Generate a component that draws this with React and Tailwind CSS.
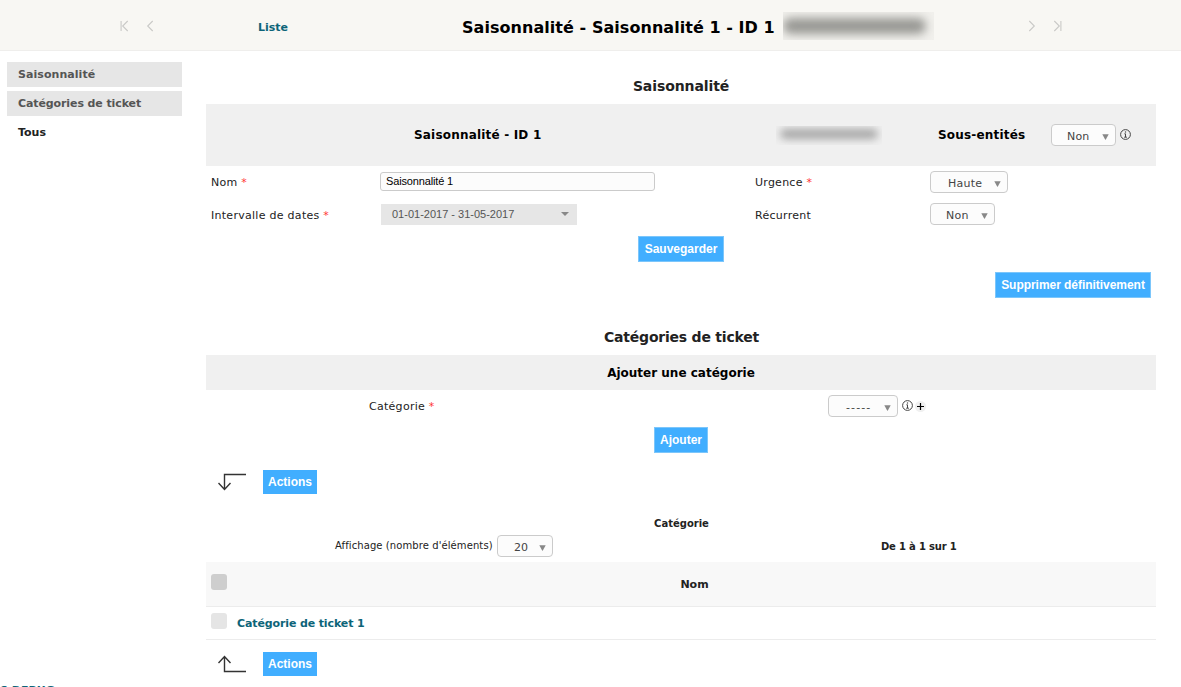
import React from "react";

function Pick({ w, children, className = "" }) {
  return (
    <span className={`flex h-[22px] shrink-0 items-center rounded-[4px] border border-[#cbcbcb] bg-[#fcfcfc] text-[11px] leading-[16px] text-[#444] ${w} ${className}`}>
      <span className="flex-1 pt-[4px] whitespace-pre">{children}</span>
      <svg className="mt-[4px] mr-[6px] h-[6px] w-[7px]" viewBox="0 0 7 6"><path d="M0.3 0.3H6.7L3.7 5.7H3.3Z" fill="#888" /></svg>
    </span>
  );
}

function Info() {
  return (
    <svg className="h-[11px] w-[11px] shrink-0" viewBox="0 0 11 11" fill="none" stroke="#444">
      <circle cx="5.5" cy="5.5" r="4.9" />
      <path d="M4.4 4.8H5.5V8M4.2 8.2H6.9" />
      <path d="M4.9 3H6.1" strokeWidth="1.2" />
    </svg>
  );
}

function Button({ children, className = "" }) {
  return (
    <button className={`flex items-center justify-center whitespace-nowrap bg-[#41aeff] font-['Liberation_Sans'] text-[12px] font-bold text-white ${className}`}>
      {children}
    </button>
  );
}

function Chevron({ bar, flip }) {
  return (
    <svg className={`h-[12px] w-[9px] ${flip ? "-scale-x-100" : ""}`} viewBox="0 0 9 12" fill="none" stroke="#c9c9c7" strokeWidth="1.1">
      <path d="M7.7 1L2.7 6L7.7 11" />
      {bar && <path d="M1.1 1V11" />}
    </svg>
  );
}

const Req = () => <span className="text-[#ff3333]"> *</span>;

function ActionRow({ up }) {
  return (
    <div className="flex h-[24px] pl-[12px]">
      <svg className="mt-[3px] h-[18px] w-[29px]" viewBox="0 0 29 18" fill="none" stroke="#333" strokeWidth="1.4">
        {up ? <path d="M28 16.5H6.5V1.5M0.5 8L6.5 1.5L12.5 8" /> : <path d="M28 1.5H6.5V16.5M0.5 10L6.5 16.5L12.5 10" />}
      </svg>
      <Button className="ml-[16px] h-[24px] w-[54px]">Actions</Button>
    </div>
  );
}

export default function App() {
  return (
    <div className="flex h-[687px] w-[1181px] flex-col overflow-hidden bg-white font-['DejaVu_Sans',sans-serif] text-[11px] text-[#222]">
      <header className="flex h-[51px] shrink-0 items-center border-b border-[#efeeec] bg-[#f8f7f3] pt-[2px]">
        <div className="flex w-[258px] gap-[16px] pl-[120px]"><Chevron bar /><Chevron /></div>
        <a className="w-[204px] pt-[4px] font-bold text-[#0d6478]">Liste</a>
        <h1 className="w-[321px] whitespace-nowrap pt-[3px] text-[16px] font-bold tracking-[0.05px] text-black">Saisonnalité - Saisonnalité 1 - ID 1</h1>
        <div className="flex h-[28px] w-[151px] items-center overflow-hidden bg-[#f1f0ec]">
          <span className="h-[16px] w-[143px] rounded-full bg-[#989894] blur-[5px]" />
        </div>
        <div className="flex gap-[16px] pl-[94px]"><Chevron flip /><Chevron bar flip /></div>
      </header>

      <div className="flex min-h-0 flex-1">
        <nav className="flex w-[206px] shrink-0 flex-col gap-[4px] pt-[11px] pl-[7px] font-bold text-[#555]">
          <a className="flex h-[25px] w-[175px] shrink-0 items-center bg-[#e6e6e6] pt-[2px] pl-[11px] tracking-[0.06px]">Saisonnalité</a>
          <a className="flex h-[25px] w-[175px] shrink-0 items-center bg-[#e6e6e6] pt-[2px] pl-[11px] tracking-[-0.1px]">Catégories de ticket</a>
          <a className="flex h-[25px] w-[175px] shrink-0 items-center pt-px pl-[11px] text-[#222]">Tous</a>
          <a className="mt-[534px] -ml-[7px] h-[16px] shrink-0 leading-[16px] whitespace-nowrap text-[#0d6478]">S DEBUG</a>
        </nav>

        <main className="flex w-[950px] flex-col">
          <h2 className="h-[53px] pt-[25px] text-center text-[14px] leading-[21px] font-bold tracking-[-0.1px]">Saisonnalité</h2>
          <div className="flex h-[62px] items-center bg-[#f0f0f0] text-[12px] font-bold tracking-[0.19px] text-black">
            <span className="w-[570px] pl-[208px]">Saisonnalité - ID 1</span>
            <span className="flex h-[19px] w-[106px] items-center overflow-hidden pb-[2px] pl-[4px]"><span className="h-[10px] w-[98px] rounded-full bg-[#a4a4a4] blur-[4px]" /></span>
            <span className="w-[169px] pl-[56px]">Sous-entités</span>
            <Pick w="w-[65px]" className="pl-[15px] font-normal tracking-[0.2px]">Non</Pick>
            <span className="ml-[4px] pb-px"><Info /></span>
          </div>
          <div className="flex h-[33px] items-center tracking-[0.25px]">
            <span className="w-[174px] pt-px pl-[5px]">Nom<Req /></span>
            <span className="-mt-[2px] flex h-[19px] w-[275px] items-center rounded-[3px] border border-[#cbcbcb] bg-[#fcfcfc] pl-[5px] font-['Liberation_Sans'] tracking-[-0.15px] text-black">Saisonnalité 1</span>
            <span className="w-[275px] pt-px pl-[100px]">Urgence<Req /></span>
            <Pick w="w-[78px]" className="-mt-[2px] pl-[17px]">Haute</Pick>
          </div>
          <div className="flex h-[32px] items-center tracking-[0.28px]">
            <span className="w-[175px] pt-[2px] pl-[5px]">Intervalle de dates<Req /></span>
            <span className="-mt-[2px] flex h-[21px] w-[196px] items-center justify-between bg-[#e6e6e6] pr-[8px] pl-[11px] font-['Liberation_Sans'] tracking-normal text-[#555]">
              01-01-2017 - 31-05-2017
              <svg className="h-[4px] w-[8px]" viewBox="0 0 8 4"><path d="M0 0H8L4 4Z" fill="#888" /></svg>
            </span>
            <span className="w-[353px] pt-[2px] pl-[178px]">Récurrent</span>
            <Pick w="w-[65px]" className="-mt-[2px] pl-[15px]">Non</Pick>
          </div>
          <div className="flex h-[36px] justify-center pt-[5px]"><Button className="h-[26px] w-[86px] border border-[#7cc6fb]">Sauvegarder</Button></div>
          <div className="flex h-[57px] justify-end pt-[5px] pr-[5px]"><Button className="h-[26px] w-[156px] border border-[#7cc6fb] tracking-[-0.04px]">Supprimer définitivement</Button></div>

          <h2 className="h-[31px] pl-px text-center text-[14px] leading-[26px] font-bold tracking-[-0.22px]">Catégories de ticket</h2>
          <div className="flex h-[35px] items-center justify-center bg-[#f0f0f0] text-[12px] font-bold text-black">Ajouter une catégorie</div>
          <div className="flex h-[32px] items-center tracking-[0.28px]">
            <span className="w-[622px] pt-[2px] pl-[163px]">Catégorie<Req /></span>
            <Pick w="w-[70px]" className="pl-[17px]"><span className="tracking-[1.1px]">-----</span></Pick>
            <span className="ml-[4px] pb-px"><Info /></span>
            <span className="ml-[2px] flex h-[11px] w-[11px] items-center justify-center rounded-full bg-[#f0f0f0]">
              <svg className="h-[7px] w-[7px]" viewBox="0 0 7 7" stroke="#000" strokeWidth="1.2"><path d="M0 3.5H7M3.5 0V7" /></svg>
            </span>
          </div>
          <div className="flex h-[48px] justify-center pt-[5px]"><Button className="h-[26px] w-[54px] border border-[#7cc6fb]">Ajouter</Button></div>
          <ActionRow />

          <div className="mt-[22px] h-[15px] pl-px text-center text-[10px] leading-[15px] font-bold">Catégorie</div>
          <div className="flex h-[31px] items-center text-[10px]">
            <span className="w-[291px] pl-[129px] pb-[2px] whitespace-nowrap tracking-[0.09px]">Affichage (nombre d'éléments)</span>
            <Pick w="w-[56px]" className="-mt-[2px] pl-[16px]">20</Pick>
            <span className="pl-[328px] font-bold tracking-[-0.18px]">De 1 à 1 sur 1</span>
          </div>
          <div className="flex h-[45px] border-b border-[#ececec] bg-[#f8f8f8] pl-[5px]">
            <span className="mt-[12px] h-[16px] w-[16px] shrink-0 rounded-[3px] bg-[#cecece]" />
            <span className="flex-1 pt-[15px] pl-[6px] text-center font-bold">Nom</span>
          </div>
          <div className="flex h-[33px] border-b border-[#ececec] pl-[5px]">
            <span className="mt-[6px] h-[16px] w-[16px] rounded-[3px] bg-[#e5e5e5]" />
            <a className="pt-[9px] pl-[10px] font-bold tracking-[-0.12px] text-[#0d6478]">Catégorie de ticket 1</a>
          </div>
          <div className="pt-[12px]"><ActionRow up /></div>
        </main>
      </div>
    </div>
  );
}
